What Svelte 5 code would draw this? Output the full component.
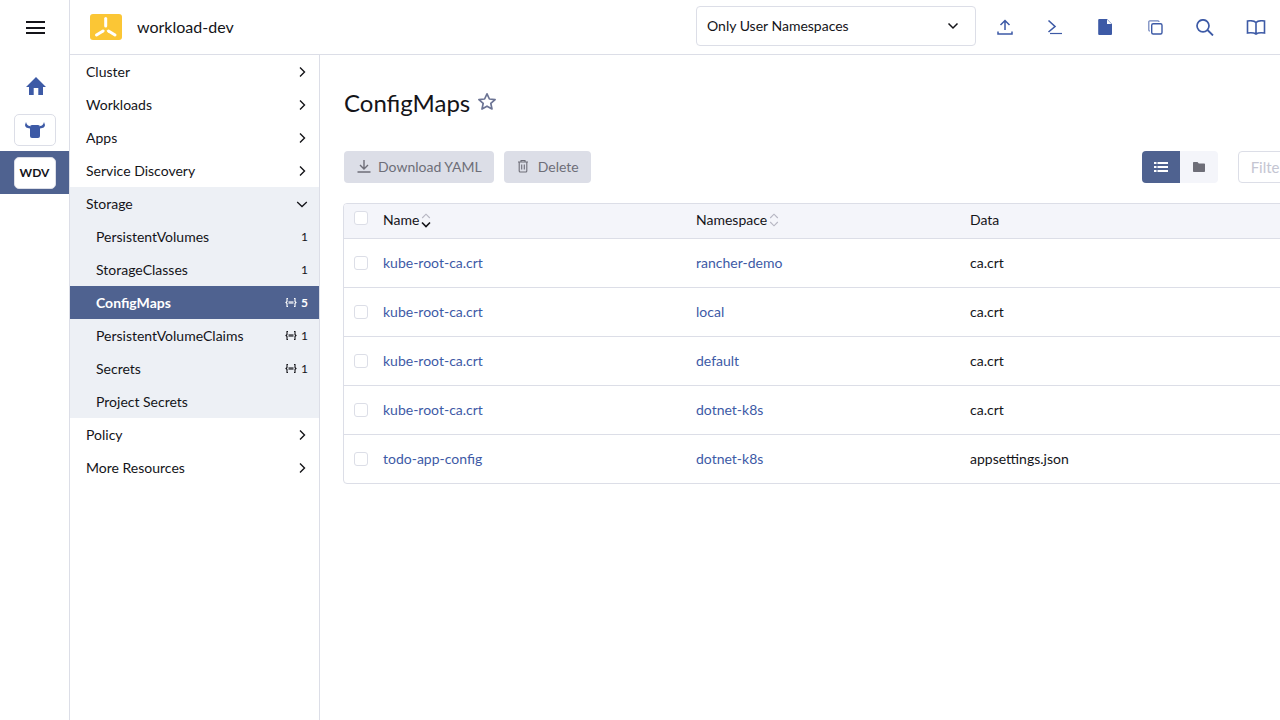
<script>
  const nav = ['Cluster','Workloads','Apps','Service Discovery'];
  const sub = [
    {n:'PersistentVolumes',c:1,ns:false},
    {n:'StorageClasses',c:1,ns:false},
    {n:'ConfigMaps',c:5,ns:true,active:true},
    {n:'PersistentVolumeClaims',c:1,ns:true},
    {n:'Secrets',c:1,ns:true},
    {n:'Project Secrets',c:null,ns:false}
  ];
  const rows = [
    ['kube-root-ca.crt','rancher-demo','ca.crt'],
    ['kube-root-ca.crt','local','ca.crt'],
    ['kube-root-ca.crt','default','ca.crt'],
    ['kube-root-ca.crt','dotnet-k8s','ca.crt'],
    ['todo-app-config','dotnet-k8s','appsettings.json']
  ];
</script>

{#snippet chev()}
  <svg class="chev" width="12" height="12" viewBox="0 0 12 12"><path d="M4 1.500 L8.500 6 L4 10.500" fill="none" stroke="#141419" stroke-width="1.400"/></svg>
{/snippet}

{#snippet nsicon()}
  <svg class="nsi" width="12" height="9" viewBox="0 0 12 9"><path d="M3 .5H2V3.500L1 4.500 2 5.500V8.500H3M9 .5h1V3.500l1 1-1 1V8.500H9" fill="none" stroke="currentColor" stroke-width="1.100"/><rect x="3.500" y="3.200" width="5" height="2.600" fill="currentColor" opacity=".7"/></svg>
{/snippet}

<div class="app">
  <aside class="rail">
    <button class="burger" aria-label="Menu"><span></span><span></span><span></span></button>
    <div class="home">
      <svg width="20" height="18" viewBox="0 0 20 18"><path d="M10 0 L20 10 H17 V18 H12.300 V11 H7.700 V18 H3 V10 H0 Z" fill="#3d5aa6"/></svg>
    </div>
    <div class="tile bull">
      <svg width="20" height="16" viewBox="0 0 20 16"><path d="M7 3H13a2 2 0 0 1 2 2V14a2 2 0 0 1-2 2H7a2 2 0 0 1-2-2V5a2 2 0 0 1 2-2Z" fill="#3d5aa6"/><path d="M1 0 L0 3 Q0 6 5 6.500 V4 Q2 4 1 0ZM19 0 L20 3 Q20 6 15 6.500 V4 Q18 4 19 0Z" fill="#3d5aa6"/></svg>
    </div>
    <div class="wdv-band"><div class="tile wdv">WDV</div></div>
  </aside>

  <div class="right">
    <header class="top">
      <div class="logo">
        <svg width="32" height="26" viewBox="0 0 32 26"><rect width="32" height="26" rx="3" fill="#fbc635"/><g stroke="#fff" stroke-width="3" stroke-linecap="round" fill="none"><path d="M15.700 4.500 V12"/><path d="M6.500 21 L13 17"/><path d="M25 21 L18.500 17"/></g></svg>
      </div>
      <div class="cluster">workload-dev</div>
      <div class="spacer"></div>
      <div class="nsfilter">
        <span class="nstext">Only User Namespaces</span>
        <svg width="12" height="8" viewBox="0 0 12 8"><path d="M1.500 1.500 L6 6 L10.500 1.500" fill="none" stroke="#141419" stroke-width="1.500"/></svg>
      </div>
      <div class="tools">
        <button class="tool" aria-label="Import"><svg width="16" height="16" viewBox="0 0 16 16"><path d="M8 11V1.500M3.500 6 8 1.500 12.500 6M1 12.500V15H15V12.500" fill="none" stroke="#3d5aa6" stroke-width="1.500"/></svg></button>
        <button class="tool" aria-label="Shell"><svg width="16" height="16" viewBox="0 0 16 16"><path d="M1.500 1.500 8 7.500 1.500 13" fill="none" stroke="#3d5aa6" stroke-width="1.600"/><path d="M3 14.500h12" stroke="#3d5aa6" stroke-width="1.200"/></svg></button>
        <button class="tool" aria-label="Kubeconfig"><svg width="14" height="16" viewBox="0 0 14 16"><path d="M1.200 0h7.800l5 5v10a1 1 0 0 1-1 1H1.200a1 1 0 0 1-1-1V1a1 1 0 0 1 1-1z" fill="#3d5aa6"/><path d="M9 .5V5h4.500z" fill="#fff"/></svg></button>
        <button class="tool" aria-label="Copy"><svg width="15" height="15" viewBox="0 0 15 15"><rect x="3.700" y="3.700" width="10.300" height="10.300" rx="1.500" fill="none" stroke="#3d5aa6" stroke-width="1.400"/><path d="M2 11H1.800A1 1 0 0 1 .8 10V1.800a1 1 0 0 1 1-1H10a1 1 0 0 1 1 1V2" fill="none" stroke="#3d5aa6" stroke-width="1.200" opacity=".75"/></svg></button>
        <button class="tool" aria-label="Search"><svg width="18" height="17" viewBox="0 0 18 17"><circle cx="7" cy="6.800" r="6" fill="none" stroke="#3d5aa6" stroke-width="1.700"/><path d="M11.500 11 17 16.500" stroke="#3d5aa6" stroke-width="1.800"/></svg></button>
        <button class="tool" aria-label="Docs"><svg width="20" height="15" viewBox="0 0 20 15"><path d="M10 2.500C8.500 1 5 .5 1.500 1V13C5 12.500 8.500 13 10 14 11.500 13 15 12.500 18.500 13V1C15 .5 11.500 1 10 2.500ZM10 2.500V14" fill="none" stroke="#3d5aa6" stroke-width="1.600"/></svg></button>
      </div>
    </header>

    <div class="body">
      <nav class="side">
        {#each nav as n}
          <div class="item">{n}{@render chev()}</div>
        {/each}
        <div class="group">
          <div class="item">Storage<svg class="chev" width="12" height="12" viewBox="0 0 12 12"><path d="M1.200 4 L6 8.500 L10.800 4" fill="none" stroke="#141419" stroke-width="1.300"/></svg></div>
          {#each sub as s}
            <div class="subitem" class:active={s.active}>
              <span>{s.n}</span>
              {#if s.c !== null}
                <span class="count">{#if s.ns}{@render nsicon()}{/if}<b>{s.c}</b></span>
              {/if}
            </div>
          {/each}
        </div>
        <div class="item">Policy{@render chev()}</div>
        <div class="item">More Resources{@render chev()}</div>
      </nav>

      <main class="main">
        <div class="content">
          <div class="title">
            <h1>ConfigMaps</h1>
            <svg width="20" height="19" viewBox="0 0 20 19"><path d="M10 1.800 12.400 7l5.700.6-4.300 3.800 1.200 5.600L10 14.200 5 17l1.200-5.600L1.900 7.600 7.600 7z" fill="none" stroke="#6c7494" stroke-width="1.700" stroke-linejoin="round"/></svg>
          </div>
          <div class="bar">
            <button class="btn">
              <svg width="14" height="14" viewBox="0 0 14 14"><path d="M7 1V9.500M3 6 7 10 11 6M.5 13H13.500" fill="none" stroke="#6e6e78" stroke-width="1.400"/></svg>
              Download YAML
            </button>
            <button class="btn del">
              <svg width="12" height="14" viewBox="0 0 12 14"><path d="M1 3H11M4 3V1.500H8V3M2.200 3V12a1 1 0 0 0 1 1H8.800a1 1 0 0 0 1-1V3M4.700 5.500V10.500M7.300 5.500V10.500" fill="none" stroke="#6e6e78" stroke-width="1.100"/></svg>
              Delete
            </button>
            <div class="spacer"></div>
            <div class="toggle">
              <span class="tg on"><svg width="14" height="12" viewBox="0 0 14 12"><path d="M0 1h2.500v2H0zM0 5h2.500v2H0zM0 9h2.500v2H0zM3.500 1H14v2H3.500zM3.500 5H14v2H3.500zM3.500 9H14v2H3.500z" fill="#fff"/></svg></span>
              <span class="tg"><svg width="12" height="10" viewBox="0 0 12 10"><path d="M.8 0H4.500L5.800 1.500H11.200a.8.8 0 0 1 .8.8V9.200a.8.8 0 0 1-.8.8H.8A.8.8 0 0 1 0 9.200V.8A.8.8 0 0 1 .8 0z" fill="#6e6e78"/></svg></span>
            </div>
            <input class="filter" placeholder="Filter" />
          </div>

          <div class="table">
            <div class="row head">
              <span class="cb"></span>
              <span class="c1 hc">Name<svg class="sort" width="10" height="16" viewBox="0 0 10 16"><path d="M1.200 6 5 2.200 8.800 6" fill="none" stroke="#b6b6c2" stroke-width="1.100"/><path d="M1 10.500 5 14.500 9 10.500" fill="none" stroke="#141419" stroke-width="1.600"/></svg></span>
              <span class="c2 hc">Namespace<svg class="sort" width="10" height="16" viewBox="0 0 10 16"><path d="M1.200 6 5 2.200 8.800 6M1.200 10 5 13.800 8.800 10" fill="none" stroke="#b6b6c2" stroke-width="1.100"/></svg></span>
              <span class="c3 hdata">Data</span>
            </div>
            {#each rows as r}
              <div class="row">
                <span class="cb"></span>
                <span class="c1 link cell">{r[0]}</span>
                <span class="c2 link cell">{r[1]}</span>
                <span class="c3 cell">{r[2]}</span>
              </div>
            {/each}
          </div>
        </div>
      </main>
    </div>
  </div>
</div>

<style>
  :global(body) { margin: 0; background: #fff; overflow: hidden; }
  .app { display: flex; width: 1280px; height: 720px; overflow: hidden; font-family: Lato, "Noto Sans", sans-serif; font-size: 14px; color: #141419; }
  .rail { width: 69px; flex: none; border-right: 1px solid #dcdee7; display: flex; flex-direction: column; align-items: center; }
  .burger { width: 19px; height: 13px; margin-top: 21px; margin-left: 2px; padding: 0; border: 0; background: none; display: flex; flex-direction: column; justify-content: space-between; }
  .burger span { display: block; height: 2px; background: #141419; }
  .home { margin-top: 43px; height: 18px; display: flex; margin-left: 2px; }
  .tile { width: 42px; box-sizing: border-box; border: 1px solid #dcdee7; border-radius: 5px; background: #fff; display: flex; align-items: center; justify-content: center; }
  .bull { height: 32px; margin-top: 19px; }
  .wdv-band { margin-top: 5px; width: 100%; height: 43px; background: #4f6290; display: flex; align-items: center; justify-content: center; }
  .wdv { height: 32px; font-weight: 700; font-size: 12px; color: #141419; }
  .right { flex: 1; min-width: 0; display: flex; flex-direction: column; }
  .top { height: 54px; flex: none; border-bottom: 1px solid #dcdee7; display: flex; align-items: center; }
  .logo { margin-left: 20px; display: flex; }
  .cluster { margin-left: 15px; font-size: 16px; padding-bottom: 2px; }
  .spacer { flex: 1; }
  .nsfilter { width: 280px; height: 40px; box-sizing: border-box; border: 1px solid #dcdee7; border-radius: 4px; display: flex; align-items: center; justify-content: space-between; padding: 0 16px 0 10px; margin-top: -2px; }
  .nstext { padding-bottom: 2px; }
  .tools { display: flex; width: 304px; padding-left: 4px; box-sizing: border-box; }
  .tool { width: 50px; height: 40px; flex: none; padding: 0; border: 0; background: none; display: flex; align-items: center; justify-content: center; }
  .tool:last-child { margin-left: 1px; }
  .body { flex: 1; display: flex; min-height: 0; }
  .side { width: 249px; flex: none; border-right: 1px solid #dcdee7; }
  .item { height: 33px; padding: 0 11px 0 16px; display: flex; align-items: center; justify-content: space-between; }
  .group { background: #edf0f5; }
  .subitem { height: 33px; padding: 0 11px 0 26px; display: flex; align-items: center; justify-content: space-between; }
  .subitem.active { background: #4f6290; color: #fff; font-weight: 700; }
  .count { display: flex; align-items: center; gap: 4px; font-size: 12px; }
  .count b { font-weight: 400; }
  .active .count b { font-weight: 700; }
  .nsi { display: block; }
  .main { flex: 1; min-width: 0; overflow: hidden; padding: 0 0 0 24px; }
  .content { width: 1100px; }
  .title { display: flex; align-items: center; gap: 7px; height: 96px; }
  h1 { margin: 0; font-size: 24px; font-weight: 400; line-height: 30px; }
  .title svg { margin-top: -4px; }
  .bar { display: flex; align-items: center; gap: 10px; height: 32px; }
  .btn { height: 32px; padding: 0 12px 2px 13px; border: 0; border-radius: 4px; background: #dcdee7; color: #6e6e78; font: inherit; white-space: nowrap; display: flex; align-items: center; gap: 7px; }
  .btn.del { gap: 9px; }
  .bar .spacer { flex: none; width: 531px; }
  .toggle { display: flex; margin-right: 10px; }
  .tg { width: 38px; height: 32px; background: #f4f5fa; display: flex; align-items: center; justify-content: center; border-radius: 0 4px 4px 0; }
  .tg.on { background: #4f6290; border-radius: 4px 0 0 4px; }
  .filter { width: 260px; height: 32px; box-sizing: border-box; border: 1px solid #dcdee7; border-radius: 4px; padding: 0 12px; font: inherit; font-size: 15px; outline: none; }
  .filter::placeholder { color: #c4c5d2; }
  .table { margin: 20px 0 0 -1px; border: 1px solid #dcdee7; border-radius: 4px; overflow: hidden; }
  .row { height: 48px; display: flex; align-items: center; border-top: 1px solid #dcdee7; }
  .row.head { height: 34px; border-top: 0; background: #f4f5fa; align-items: flex-start; padding-top: 6px; box-sizing: border-box; }
  .row .cb { width: 12px; height: 12px; border: 1px solid #dcdee7; border-radius: 3px; background: #fff; margin-left: 10px; flex: none; }
  .row.head .cb { margin-top: 1px; }
  .c1 { margin-left: 15px; width: 313px; flex: none; }
  .c2 { width: 274px; flex: none; }
  .c3 { flex: 1; }
  .cell { padding-bottom: 2px; }
  .hdata { padding-top: 1px; }
  .hc { display: flex; align-items: center; }
  .sort { margin: 2px 0 0 2px; }
  .link { color: #3d5aa6; }
</style>
